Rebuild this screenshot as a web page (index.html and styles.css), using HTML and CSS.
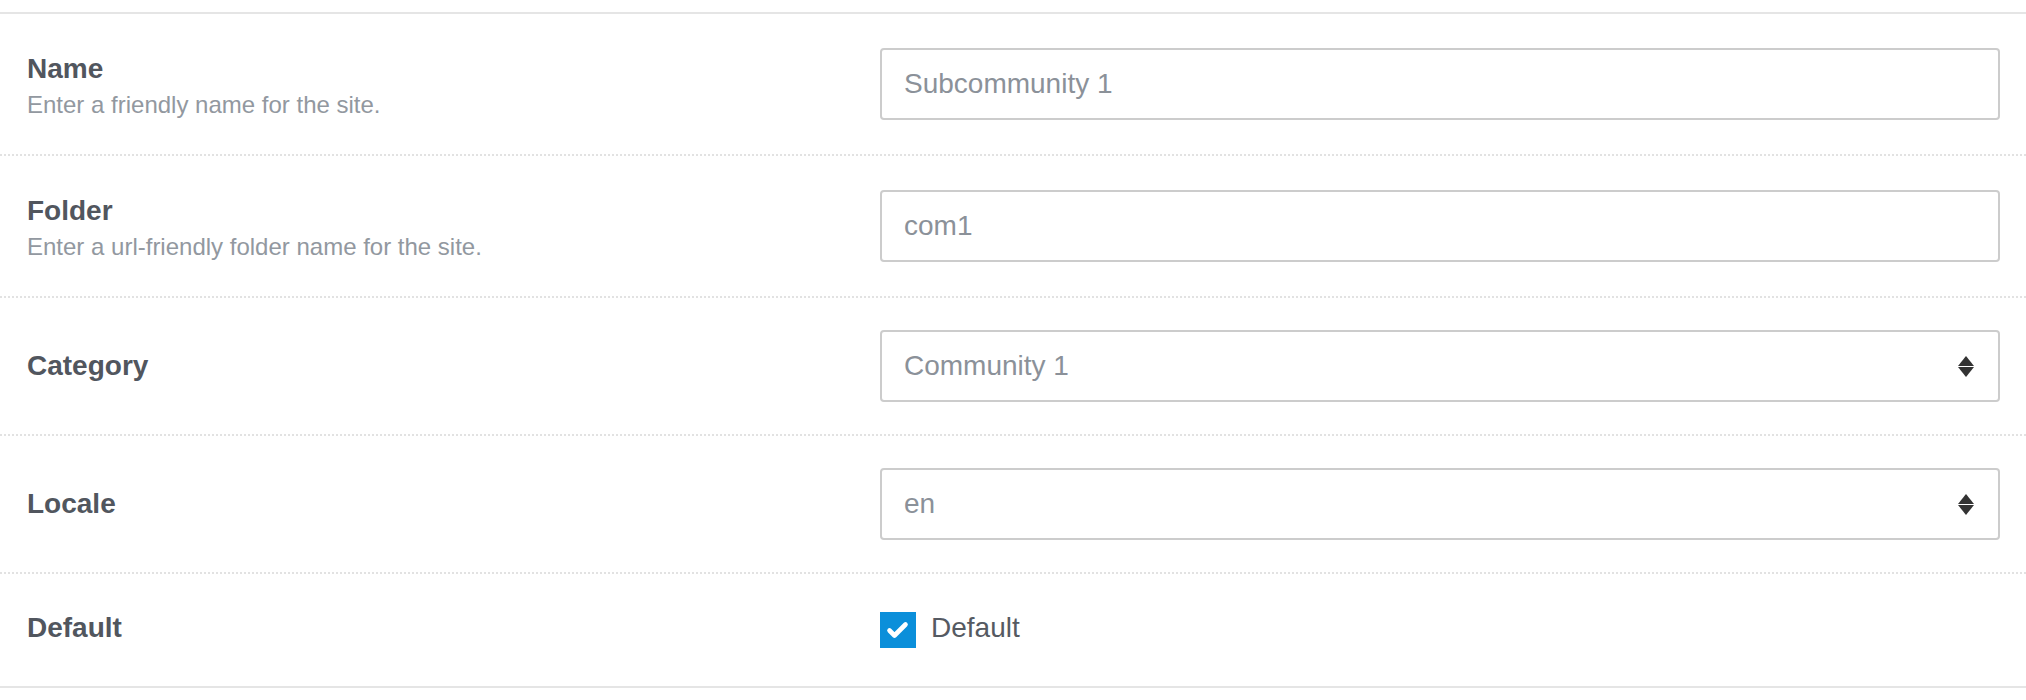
FILE: index.html
```html
<!DOCTYPE html>
<html lang="en">
<head>
<meta charset="utf-8">
<title>Site settings</title>
<link rel="stylesheet" href="styles.css">
</head>
<body>
<div class="form">
  <div class="row row-desc">
    <div class="label-col">
      <div class="label">Name</div>
      <div class="help">Enter a friendly name for the site.</div>
    </div>
    <div class="control-col">
      <div class="field">Subcommunity 1</div>
    </div>
  </div>
  <div class="row row-desc">
    <div class="label-col">
      <div class="label">Folder</div>
      <div class="help">Enter a url-friendly folder name for the site.</div>
    </div>
    <div class="control-col">
      <div class="field">com1</div>
    </div>
  </div>
  <div class="row">
    <div class="label-col">
      <div class="label">Category</div>
    </div>
    <div class="control-col">
      <div class="field select">
        <span>Community 1</span>
        <svg class="arrows" width="16" height="21" viewBox="0 0 16 21"><polygon points="0,10 8,0 16,10" fill="#333"/><polygon points="0,11 16,11 8,21" fill="#333"/></svg>
      </div>
    </div>
  </div>
  <div class="row">
    <div class="label-col">
      <div class="label">Locale</div>
    </div>
    <div class="control-col">
      <div class="field select">
        <span>en</span>
        <svg class="arrows" width="16" height="21" viewBox="0 0 16 21"><polygon points="0,10 8,0 16,10" fill="#333"/><polygon points="0,11 16,11 8,21" fill="#333"/></svg>
      </div>
    </div>
  </div>
  <div class="row row-check">
    <div class="label-col">
      <div class="label label-check">Default</div>
    </div>
    <div class="control-col check-col">
      <span class="checkbox">
        <svg width="36" height="36" viewBox="0 0 36 36"><path d="M9.5 18.5 L14.5 23.5 L25.5 12.5" fill="none" stroke="#fff" stroke-width="4.6" stroke-linecap="round" stroke-linejoin="round"/></svg>
      </span>
      <span class="check-text">Default</span>
    </div>
  </div>
</div>
</body>
</html>
```

FILE: styles.css
```css
html, body {
  margin: 0;
  padding: 0;
  background: #ffffff;
}

body {
  padding-top: 12px;
  font-family: "Liberation Sans", Arial, Helvetica, sans-serif;
}

.form {
  border-top: 2px solid #e5e5e5;
  border-bottom: 2px solid #e5e5e5;
}

.row {
  display: grid;
  grid-template-columns: 853px 1fr;
  align-items: center;
  padding: 32px 26px 32px 27px;
  border-bottom: 2px dotted #e2e2e2;
}

.row:last-child {
  border-bottom: none;
}

.row-desc .label-col {
  padding: 3px 0 2px;
}

.label {
  font-size: 28px;
  line-height: 40px;
  font-weight: bold;
  color: #51565e;
}

.help {
  font-size: 24px;
  line-height: 31px;
  color: #9298a0;
}

.field {
  box-sizing: border-box;
  height: 72px;
  border: 2px solid #cccccc;
  border-radius: 4px;
  padding: 0 24px 0 22px;
  display: flex;
  align-items: center;
  font-size: 28px;
  color: #8b9199;
}

.select {
  justify-content: space-between;
}

.arrows {
  display: block;
  margin-top: 1px;
}

.row-check {
  align-items: start;
}

.label-check {
  padding-top: 2px;
}

.check-col {
  display: flex;
  align-items: flex-start;
  height: 48px;
}

.checkbox {
  display: block;
  width: 36px;
  height: 36px;
  margin-top: 6px;
  background: #0b8fda;
}

.checkbox svg {
  display: block;
}

.check-text {
  margin-left: 15px;
  padding-top: 2px;
  font-size: 28px;
  line-height: 40px;
  color: #555a62;
}
```
